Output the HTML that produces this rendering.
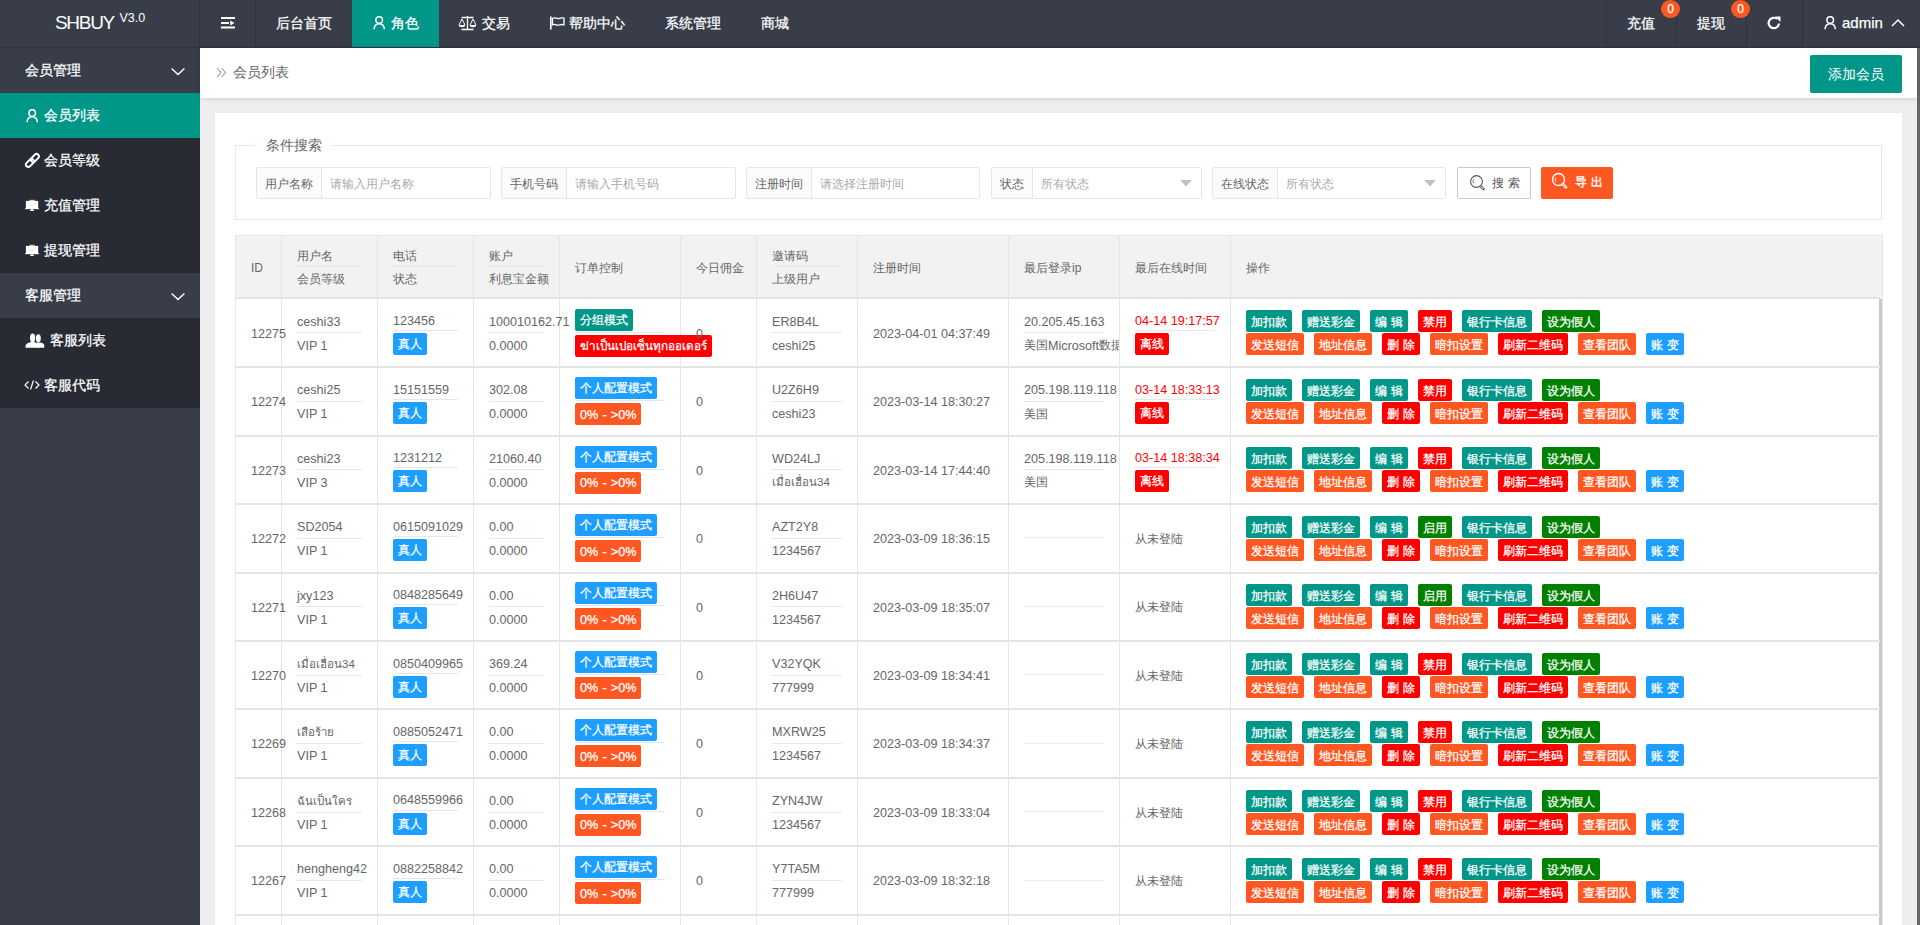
<!DOCTYPE html><html><head><meta charset="utf-8"><style>
*{margin:0;padding:0;box-sizing:border-box}
html,body{width:1920px;height:925px;overflow:hidden;background:#eeeeee;font-family:"Liberation Sans",sans-serif;color:#666}
.abs{position:absolute}
.hdr{position:absolute;left:0;top:0;width:1920px;height:48px;background:#393D49;color:#fff;font-size:14px}
.hdr .it{position:absolute;top:0;height:47px;line-height:47px;white-space:nowrap}
.side{position:absolute;left:0;top:48px;width:200px;height:877px;background:#393D49;color:#fff;font-size:14px}
.side .row{position:absolute;left:0;width:200px;height:45px;line-height:45px;white-space:nowrap}
.bc{position:absolute;left:200px;top:48px;width:1717px;height:50px;background:#fff;box-shadow:0 1px 4px rgba(0,0,0,.13)}
.card{position:absolute;left:215px;top:113px;width:1687px;height:820px;background:#fff;box-shadow:0 0 2px rgba(0,0,0,.05)}
.lbl{position:absolute;height:32px;border:1px solid #e6e6e6;border-radius:2px;background:#fff;font-size:12px}
.lbl .l{position:absolute;left:0;top:0;height:30px;line-height:33px;background:#fbfbfb;border-right:1px solid #e6e6e6;color:#666;padding-left:8px;border-radius:2px 0 0 2px}
.lbl .p{position:absolute;top:0;height:30px;line-height:33px;color:#aaa}
.tb{position:absolute;font-size:12px;color:#666}
.cell{position:absolute;overflow:visible;white-space:nowrap}
.ln{height:23px;line-height:23px;}
.bd{border-bottom:1px solid #e6e6e6}
.n{font-size:12.6px;position:relative;top:1.3px}
.up1{position:relative;top:0.5px}
.hs{position:relative;top:1.5px}
.hs2{position:relative;top:0.3px}
.cn{position:relative;top:1px}
.hdr,.side,.bg,.btn{-webkit-text-stroke:0.25px currentColor}
.bg{display:inline-block;height:22px;line-height:22px;padding:0 5px;border-radius:2px;color:#fff;font-size:12px;white-space:nowrap;vertical-align:top}
.btn{position:absolute;height:22px;line-height:24px;border-radius:2px;color:#fff;font-size:12px;text-align:center;white-space:nowrap}
</style></head><body>
<div class="hdr">
<div class="abs" style="left:0;top:47px;width:1920px;height:1px;background:#30333d"></div>
<div class="abs" style="left:199px;top:0;width:1px;height:48px;background:#30333d"></div>
<div class="abs" style="left:255px;top:0;width:1px;height:47px;background:#30333d"></div>
<div class="abs" style="left:55px;top:8.5px;font-size:19px;letter-spacing:-1.3px;line-height:28px;color:#fff;-webkit-text-stroke:0">SHBUY</div>
<div class="abs" style="left:119.5px;top:8px;font-size:12.5px;line-height:20px;color:#fff;-webkit-text-stroke:0">V3.0</div>
<svg class="abs" style="left:221px;top:16px" width="15" height="14" viewBox="0 0 15 14"><rect x="0" y="1" width="14" height="2" fill="#fff"/><rect x="0" y="6" width="8" height="2" fill="#fff"/><path d="M9.2 4.6 L13.5 7 L9.2 9.4Z" fill="#fff"/><rect x="0" y="10.5" width="14" height="2" fill="#fff"/></svg>
<div class="abs" style="left:352px;top:0;width:87px;height:47px;background:#009688"></div>
<div class="it" style="left:276px">后台首页</div>
<svg class="abs" style="left:373px;top:16px" width="13" height="14" viewBox="0 0 13 14"><circle cx="6.2" cy="4" r="3.3" fill="none" stroke="#fff" stroke-width="1.5"/><path d="M1 13.2 C1.3 9.6 3.4 7.8 6.2 7.8 C9 7.8 11.1 9.6 11.4 13.2" fill="none" stroke="#fff" stroke-width="1.5"/></svg>
<div class="it" style="left:391px">角色</div>
<svg class="abs" style="left:458px;top:15px" width="20" height="16" viewBox="0 0 20 16"><path d="M3.5 2.5 H15.5 M9.5 1 V14.5 M3.5 14.5 H15.5" stroke="#fff" stroke-width="1.3" fill="none"/><path d="M4 4 L1 10 M4 4 L7 10 M15 4 L12 10 M15 4 L18 10" stroke="#fff" stroke-width="1" fill="none"/><path d="M0.8 10 H7.2 Q7 12.2 4 12.2 Q1 12.2 0.8 10Z M11.8 10 H18.2 Q18 12.2 15 12.2 Q12 12.2 11.8 10Z" fill="#fff"/></svg>
<div class="it" style="left:482px">交易</div>
<svg class="abs" style="left:549px;top:16px" width="17" height="14" viewBox="0 0 17 14"><rect x="1" y="0.5" width="1.6" height="13" fill="#fff"/><path d="M3.5 2.2 C6 0.8 8 3.4 10.5 2.4 C12 1.8 13.5 1.8 15 2.2 V8.8 C13.5 8.4 12 8.4 10.5 9 C8 10 6 7.4 3.5 8.8Z" fill="none" stroke="#fff" stroke-width="1.3"/></svg>
<div class="it" style="left:569px">帮助中心</div>
<div class="it" style="left:665px">系统管理</div>
<div class="it" style="left:761px">商城</div>
<div class="abs" style="left:1606px;top:0;width:1px;height:47px;background:#30333d"></div>
<div class="abs" style="left:1676px;top:0;width:1px;height:47px;background:#30333d"></div>
<div class="abs" style="left:1746px;top:0;width:1px;height:47px;background:#30333d"></div>
<div class="abs" style="left:1802px;top:0;width:1px;height:47px;background:#30333d"></div>
<div class="it" style="left:1627px">充值</div>
<div class="it" style="left:1697px">提现</div>
<div class="abs" style="left:1661px;top:0px;width:19px;height:18px;border-radius:9.5px;background:#FF5722;color:#fff;font-size:12px;line-height:18px;text-align:center">0</div>
<div class="abs" style="left:1731px;top:0px;width:19px;height:18px;border-radius:9.5px;background:#FF5722;color:#fff;font-size:12px;line-height:18px;text-align:center">0</div>
<svg class="abs" style="left:1766px;top:15px" width="16" height="16" viewBox="0 0 16 16"><path d="M13 8.5 A5.2 5.2 0 1 1 11.2 4" fill="none" stroke="#fff" stroke-width="2.2"/><path d="M9 1.5 L14.5 1.5 L14.5 7 Z" fill="#fff"/></svg>
<svg class="abs" style="left:1824px;top:16px" width="13" height="14" viewBox="0 0 13 14"><circle cx="6.2" cy="4" r="3.3" fill="none" stroke="#fff" stroke-width="1.5"/><path d="M1 13.2 C1.3 9.6 3.4 7.8 6.2 7.8 C9 7.8 11.1 9.6 11.4 13.2" fill="none" stroke="#fff" stroke-width="1.5"/></svg>
<div class="it" style="left:1842px;top:-1px;font-size:15px">admin</div>
<svg class="abs" style="left:1891px;top:18px" width="14" height="9" viewBox="0 0 14 9"><path d="M1 8 L7 2 L13 8" fill="none" stroke="#fff" stroke-width="1.5"/></svg>
</div>
<div class="side">
<div class="row" style="top:0px;background:#393D49">
<span class="abs" style="left:25px;top:0">会员管理</span>
<svg class="abs" style="left:171px;top:19px" width="14" height="9" viewBox="0 0 14 9"><path d="M0.6 1.4 L7 7.6 L13.4 1.4" fill="none" stroke="#fff" stroke-width="1.4"/></svg>
</div>
<div class="row" style="top:45px;background:#009688">
<svg class="abs" style="left:26px;top:16px" width="13" height="14" viewBox="0 0 13 14"><circle cx="6.2" cy="4" r="3.3" fill="none" stroke="#fff" stroke-width="1.5"/><path d="M1 13.2 C1.3 9.6 3.4 7.8 6.2 7.8 C9 7.8 11.1 9.6 11.4 13.2" fill="none" stroke="#fff" stroke-width="1.5"/></svg>
<span class="abs" style="left:44px;top:0">会员列表</span>
</div>
<div class="row" style="top:90px;background:#282B33">
<svg class="abs" style="left:24px;top:14px" width="17" height="17" viewBox="0 0 17 17"><g fill="none" stroke="#fff" stroke-width="1.9"><rect x="1.25" y="8.60" width="9.30" height="4.80" rx="2.40" transform="rotate(-45 5.90 11.00)"/><rect x="6.25" y="3.60" width="9.30" height="4.80" rx="2.40" transform="rotate(-45 10.90 6.00)"/></g></svg>
<span class="abs" style="left:44px;top:0">会员等级</span>
</div>
<div class="row" style="top:135px;background:#282B33">
<svg class="abs" style="left:24px;top:16px" width="16" height="13" viewBox="0 0 16 13"><rect x="5.4" y="0.8" width="5.4" height="1.6" fill="#ccc"/><rect x="1.9" y="1.9" width="12.3" height="8" fill="#fff"/><rect x="1.2" y="9" width="13.6" height="1.2" fill="#fff"/><rect x="7.1" y="10" width="1.7" height="1.2" fill="#fff"/><rect x="6.1" y="11" width="3.8" height="1" fill="#fff"/><path d="M4.5 7.2 L6.5 5.8 L8.5 6.4 L11.5 4.4" stroke="#e8c8b8" stroke-width="0.7" fill="none"/></svg>
<span class="abs" style="left:44px;top:0">充值管理</span>
</div>
<div class="row" style="top:180px;background:#282B33">
<svg class="abs" style="left:24px;top:16px" width="16" height="13" viewBox="0 0 16 13"><rect x="5.4" y="0.8" width="5.4" height="1.6" fill="#ccc"/><rect x="1.9" y="1.9" width="12.3" height="8" fill="#fff"/><rect x="1.2" y="9" width="13.6" height="1.2" fill="#fff"/><rect x="7.1" y="10" width="1.7" height="1.2" fill="#fff"/><rect x="6.1" y="11" width="3.8" height="1" fill="#fff"/><path d="M4.5 7.2 L6.5 5.8 L8.5 6.4 L11.5 4.4" stroke="#e8c8b8" stroke-width="0.7" fill="none"/></svg>
<span class="abs" style="left:44px;top:0">提现管理</span>
</div>
<div class="row" style="top:225px;background:#393D49">
<span class="abs" style="left:25px;top:0">客服管理</span>
<svg class="abs" style="left:171px;top:19px" width="14" height="9" viewBox="0 0 14 9"><path d="M0.6 1.4 L7 7.6 L13.4 1.4" fill="none" stroke="#fff" stroke-width="1.4"/></svg>
</div>
<div class="row" style="top:270px;background:#282B33">
<svg class="abs" style="left:24px;top:14px" width="22" height="17" viewBox="0 0 22 17"><ellipse cx="14.3" cy="6.3" rx="2.5" ry="4" fill="#fff"/><path d="M13 15.7 V10.6 L16.5 10.4 Q20 11 20.3 13.5 V15.7Z" fill="#fff"/><ellipse cx="8.6" cy="5.9" rx="3.2" ry="4.8" fill="#282B33"/><ellipse cx="8.6" cy="5.9" rx="2.6" ry="4.3" fill="#fff"/><path d="M1.6 15.7 V13.6 Q2.2 11 6.5 10.2 L7.5 9.5 L9.8 9.5 L10.8 10.2 Q14.8 11 15.3 13.6 V15.7Z" fill="#fff"/></svg>
<span class="abs" style="left:50px;top:0">客服列表</span>
</div>
<div class="row" style="top:315px;background:#282B33">
<svg class="abs" style="left:24px;top:17px" width="16" height="10" viewBox="0 0 16 10"><path d="M4.5 1.5 L1 5 L4.5 8.5 M11.5 1.5 L15 5 L11.5 8.5 M9.5 0.5 L6.5 9.5" fill="none" stroke="#fff" stroke-width="1.2"/></svg>
<span class="abs" style="left:44px;top:0">客服代码</span>
</div>
</div>
<div class="abs" style="left:1917px;top:48px;width:3px;height:877px;background:#666"></div>
<div class="bc">
<svg class="abs" style="left:16px;top:19px" width="11" height="11" viewBox="0 0 11 11"><path d="M1 1 L5 5.5 L1 10 M5.5 1 L9.5 5.5 L5.5 10" fill="none" stroke="#999" stroke-width="1.1"/></svg>
<div class="abs" style="left:33px;top:0;line-height:49px;font-size:14px;color:#666">会员列表</div>
<div class="abs" style="left:1610px;top:7px;width:92px;height:38px;line-height:38px;background:#009688;color:#fff;border-radius:2px;text-align:center;font-size:14px">添加会员</div>
</div>
<div class="card"></div>
<div class="abs" style="left:235px;top:145px;width:1647px;height:75px;border:1px solid #e6e6e6"></div>
<div class="abs" style="left:255px;top:136px;width:77px;height:18px;background:#fff"></div>
<div class="abs" style="left:266px;top:136px;font-size:14px;line-height:18px;color:#666">条件搜索</div>
<div class="lbl" style="left:256.0px;top:167px;width:234.5px">
<div class="l" style="width:65px">用户名称</div>
<div class="p" style="left:73px">请输入用户名称</div>
</div>
<div class="lbl" style="left:501.0px;top:167px;width:234.6px">
<div class="l" style="width:65px">手机号码</div>
<div class="p" style="left:73px">请输入手机号码</div>
</div>
<div class="lbl" style="left:746.0px;top:167px;width:234.3px">
<div class="l" style="width:65px">注册时间</div>
<div class="p" style="left:73px">请选择注册时间</div>
</div>
<div class="lbl" style="left:991.0px;top:167px;width:210.6px">
<div class="l" style="width:41px">状态</div>
<div class="p" style="left:49px">所有状态</div>
<svg class="abs" style="right:9px;top:12px" width="12" height="7" viewBox="0 0 12 7"><path d="M0 0 H12 L6 6.5Z" fill="#c2c2c2"/></svg>
</div>
<div class="lbl" style="left:1212.0px;top:167px;width:234.4px">
<div class="l" style="width:65px">在线状态</div>
<div class="p" style="left:73px">所有状态</div>
<svg class="abs" style="right:9px;top:12px" width="12" height="7" viewBox="0 0 12 7"><path d="M0 0 H12 L6 6.5Z" fill="#c2c2c2"/></svg>
</div>
<div class="abs" style="left:1457px;top:167px;width:74px;height:32px;border:1px solid #c9c9c9;border-radius:2px;background:#fff;font-size:12px;color:#555">
<svg class="abs" style="left:11px;top:6px" width="18" height="18" viewBox="0 0 18 18"><circle cx="7.5" cy="7.5" r="5.9" fill="none" stroke="#555" stroke-width="1.1"/><path d="M11.8 12.3 L14.6 15.1" stroke="#555" stroke-width="2.6" stroke-linecap="round"/><path d="M11.8 12.3 L14.6 15.1" stroke="#fff" stroke-width="1" stroke-linecap="round"/><path d="M4.6 5.5 A3.4 3.4 0 0 0 4.8 9.5" fill="none" stroke="#555" stroke-width="0.8"/></svg>
<div class="abs" style="left:34px;top:0;line-height:30px;letter-spacing:4px">搜索</div>
</div>
<div class="abs" style="left:1541px;top:167px;width:72px;height:32px;border-radius:2px;background:#FF5722;font-size:12px;color:#fff">
<svg class="abs" style="left:10px;top:5px" width="18" height="18" viewBox="0 0 18 18"><circle cx="7.5" cy="7.5" r="6" fill="none" stroke="#fff" stroke-width="1.3"/><path d="M12 12.3 L15 15.3" stroke="#fff" stroke-width="2.8" stroke-linecap="round"/><path d="M12 12.3 L15 15.3" stroke="#FF5722" stroke-width="0.9" stroke-linecap="round"/><path d="M4.6 5.5 A3.4 3.4 0 0 0 4.8 9.5" fill="none" stroke="#fff" stroke-width="0.9"/></svg>
<div class="abs" style="left:34px;top:0;line-height:31px;letter-spacing:4px;-webkit-text-stroke:0.35px #fff">导出</div>
</div>
<div class="abs" style="left:235px;top:235px;width:1648px;height:63.60px;background:#f2f2f2;border:1px solid #e6e6e6;border-bottom:none"></div>
<div class="abs" style="left:235px;top:235px;width:1px;height:690px;background:#e6e6e6"></div>
<div class="abs" style="left:281px;top:235px;width:1px;height:690px;background:#e6e6e6"></div>
<div class="abs" style="left:377px;top:235px;width:1px;height:690px;background:#e6e6e6"></div>
<div class="abs" style="left:473px;top:235px;width:1px;height:690px;background:#e6e6e6"></div>
<div class="abs" style="left:559px;top:235px;width:1px;height:690px;background:#e6e6e6"></div>
<div class="abs" style="left:680px;top:235px;width:1px;height:690px;background:#e6e6e6"></div>
<div class="abs" style="left:756px;top:235px;width:1px;height:690px;background:#e6e6e6"></div>
<div class="abs" style="left:857px;top:235px;width:1px;height:690px;background:#e6e6e6"></div>
<div class="abs" style="left:1008px;top:235px;width:1px;height:690px;background:#e6e6e6"></div>
<div class="abs" style="left:1119px;top:235px;width:1px;height:690px;background:#e6e6e6"></div>
<div class="abs" style="left:1230px;top:235px;width:1px;height:690px;background:#e6e6e6"></div>
<div class="abs" style="left:1882px;top:235px;width:1px;height:690px;background:#e6e6e6"></div>
<div class="abs" style="left:1879px;top:299px;width:3px;height:626px;background:#c8c8c8"></div>
<div class="abs" style="left:235px;top:297.00px;width:1645px;height:2px;background:#e4e4e4"></div>
<div class="abs" style="left:235px;top:366.08px;width:1645px;height:2px;background:#e4e4e4"></div>
<div class="abs" style="left:235px;top:434.55px;width:1645px;height:2px;background:#e4e4e4"></div>
<div class="abs" style="left:235px;top:503.02px;width:1645px;height:2px;background:#e4e4e4"></div>
<div class="abs" style="left:235px;top:571.50px;width:1645px;height:2px;background:#e4e4e4"></div>
<div class="abs" style="left:235px;top:639.98px;width:1645px;height:2px;background:#e4e4e4"></div>
<div class="abs" style="left:235px;top:708.45px;width:1645px;height:2px;background:#e4e4e4"></div>
<div class="abs" style="left:235px;top:776.92px;width:1645px;height:2px;background:#e4e4e4"></div>
<div class="abs" style="left:235px;top:845.40px;width:1645px;height:2px;background:#e4e4e4"></div>
<div class="abs" style="left:235px;top:913.88px;width:1645px;height:2px;background:#e4e4e4"></div>
<div class="tb">
<div class="cell" style="left:251px;top:255.30px;line-height:23px;height:23px"><span class="hs">ID</span></div>
<div class="cell" style="left:297px;top:243.30px;width:65px">
<div class="ln bd" style="height:24.0px;line-height:23.0px"><span class="hs">用户名</span></div>
<div class="ln"><span class="hs2">会员等级</span></div>
</div>
<div class="cell" style="left:393px;top:243.30px;width:65px">
<div class="ln bd" style="height:24.0px;line-height:23.0px"><span class="hs">电话</span></div>
<div class="ln"><span class="hs2">状态</span></div>
</div>
<div class="cell" style="left:489px;top:243.30px;width:55px">
<div class="ln bd" style="height:24.0px;line-height:23.0px"><span class="hs">账户</span></div>
<div class="ln"><span class="hs2">利息宝金额</span></div>
</div>
<div class="cell" style="left:575px;top:255.30px;line-height:23px;height:23px"><span class="hs">订单控制</span></div>
<div class="cell" style="left:696px;top:255.30px;line-height:23px;height:23px"><span class="hs">今日佣金</span></div>
<div class="cell" style="left:772px;top:243.30px;width:70px">
<div class="ln bd" style="height:24.0px;line-height:23.0px"><span class="hs">邀请码</span></div>
<div class="ln"><span class="hs2">上级用户</span></div>
</div>
<div class="cell" style="left:873px;top:255.30px;line-height:23px;height:23px"><span class="hs">注册时间</span></div>
<div class="cell" style="left:1024px;top:255.30px;line-height:23px;height:23px"><span class="hs">最后登录ip</span></div>
<div class="cell" style="left:1135px;top:255.30px;line-height:23px;height:23px"><span class="hs">最后在线时间</span></div>
<div class="cell" style="left:1246px;top:255.30px;line-height:23px;height:23px"><span class="hs">操作</span></div>
<div class="cell" style="left:251px;top:321.34px;line-height:23px;height:23px"><span class="n">12275</span></div>
<div class="cell" style="left:297px;top:309.34px;width:65px">
<div class="ln bd" style="height:24.0px;line-height:23.0px"><span class="n">ceshi33</span></div>
<div class="ln"><span class="n">VIP 1</span></div>
</div>
<div class="cell" style="left:393px;top:307.34px;width:65px">
<div class="ln bd" style="height:24.0px;line-height:23.0px"><span style="position:relative;top:1.5px"><span class="n">123456</span></span></div>
<div style="height:25.0px;padding-top:2px"><span class="bg" style="background:#1E9FFF">真人</span></div>
</div>
<div class="cell" style="left:489px;top:309.34px;width:55px">
<div class="ln bd" style="height:24.0px;line-height:23.0px"><span class="n">100010162.71</span></div>
<div class="ln"><span class="n">0.0000</span></div>
</div>
<div class="cell" style="left:575px;top:308.09px;width:90px">
<div class="bd" style="height:24.5px;padding-top:0.5px"><span class="bg" style="background:#009688">分组模式</span></div>
<div style="height:25.0px;padding-top:2px"><span class="bg" style="background:#FF0000"><span style="font-size:11.7px">ฆ่าเป็นเปอเซ็นทุกออเดอร์</span></span></div>
</div>
<div class="cell" style="left:696px;top:321.34px;line-height:23px;height:23px"><span class="n">0</span></div>
<div class="cell" style="left:772px;top:309.34px;width:70px">
<div class="ln bd" style="height:24.0px;line-height:23.0px"><span class="n">ER8B4L</span></div>
<div class="ln"><span class="n">ceshi25</span></div>
</div>
<div class="cell" style="left:873px;top:321.34px;line-height:23px;height:23px"><span class="n">2023-04-01 04:37:49</span></div>
<div style="position:absolute;left:1008px;top:0;width:111px;height:925px;overflow:hidden;clip-path:inset(0)">
<div class="cell" style="left:16px;top:309.34px;width:80px">
<div class="ln bd" style="height:24px"><span class="n">20.205.45.163</span></div>
<div class="ln"><span class="cn">美国</span><span class="n">Microsoft</span><span class="cn">数据中心</span></div>
</div></div>
<div class="cell" style="left:1135px;top:307.34px;width:80px">
<div class="ln bd" style="height:24.0px;line-height:23.0px"><span style="position:relative;top:1.5px"><span class="n" style="color:#f00">04-14 19:17:57</span></span></div>
<div style="height:25.0px;padding-top:2px"><span class="bg" style="background:#FF0000">离线</span></div>
</div>
<div class="btn" style="left:1246px;top:310.34px;width:46px;background:#009688">加扣款</div>
<div class="btn" style="left:1302px;top:310.34px;width:58px;background:#009688">赠送彩金</div>
<div class="btn" style="left:1370px;top:310.34px;width:38px;background:#009688">编 辑</div>
<div class="btn" style="left:1418px;top:310.34px;width:34px;background:#FF0000">禁用</div>
<div class="btn" style="left:1462px;top:310.34px;width:70px;background:#009688">银行卡信息</div>
<div class="btn" style="left:1542px;top:310.34px;width:58px;background:#008000">设为假人</div>
<div class="btn" style="left:1246px;top:333.34px;width:58px;background:#FF5722">发送短信</div>
<div class="btn" style="left:1314px;top:333.34px;width:58px;background:#FF5722">地址信息</div>
<div class="btn" style="left:1382px;top:333.34px;width:38px;background:#FF0000">删 除</div>
<div class="btn" style="left:1430px;top:333.34px;width:58px;background:#FF5722">暗扣设置</div>
<div class="btn" style="left:1498px;top:333.34px;width:70px;background:#FF0000">刷新二维码</div>
<div class="btn" style="left:1578px;top:333.34px;width:58px;background:#FF5722">查看团队</div>
<div class="btn" style="left:1646px;top:333.34px;width:38px;background:#1E9FFF">账 变</div>
<div class="cell" style="left:251px;top:389.81px;line-height:23px;height:23px"><span class="n">12274</span></div>
<div class="cell" style="left:297px;top:377.81px;width:65px">
<div class="ln bd" style="height:24.0px;line-height:23.0px"><span class="n">ceshi25</span></div>
<div class="ln"><span class="n">VIP 1</span></div>
</div>
<div class="cell" style="left:393px;top:375.81px;width:65px">
<div class="ln bd" style="height:24.0px;line-height:23.0px"><span style="position:relative;top:1.5px"><span class="n">15151559</span></span></div>
<div style="height:25.0px;padding-top:2px"><span class="bg" style="background:#1E9FFF">真人</span></div>
</div>
<div class="cell" style="left:489px;top:377.81px;width:55px">
<div class="ln bd" style="height:24.0px;line-height:23.0px"><span class="n">302.08</span></div>
<div class="ln"><span class="n">0.0000</span></div>
</div>
<div class="cell" style="left:575px;top:376.56px;width:90px">
<div class="bd" style="height:24.5px;padding-top:0.5px"><span class="bg" style="background:#1E9FFF">个人配置模式</span></div>
<div style="height:25.0px;padding-top:2px"><span class="bg" style="background:#FF5722"><span style="font-size:12.6px;word-spacing:0.7px;position:relative;top:0.5px">0% - &gt;0%</span></span></div>
</div>
<div class="cell" style="left:696px;top:389.81px;line-height:23px;height:23px"><span class="n">0</span></div>
<div class="cell" style="left:772px;top:377.81px;width:70px">
<div class="ln bd" style="height:24.0px;line-height:23.0px"><span class="n">U2Z6H9</span></div>
<div class="ln"><span class="n">ceshi23</span></div>
</div>
<div class="cell" style="left:873px;top:389.81px;line-height:23px;height:23px"><span class="n">2023-03-14 18:30:27</span></div>
<div style="position:absolute;left:1008px;top:0;width:111px;height:925px;overflow:hidden;clip-path:inset(0)">
<div class="cell" style="left:16px;top:377.81px;width:80px">
<div class="ln bd" style="height:24px"><span class="n">205.198.119.118</span></div>
<div class="ln"><span class="cn">美国</span></div>
</div></div>
<div class="cell" style="left:1135px;top:375.81px;width:80px">
<div class="ln bd" style="height:24.0px;line-height:23.0px"><span style="position:relative;top:1.5px"><span class="n" style="color:#f00">03-14 18:33:13</span></span></div>
<div style="height:25.0px;padding-top:2px"><span class="bg" style="background:#FF0000">离线</span></div>
</div>
<div class="btn" style="left:1246px;top:378.81px;width:46px;background:#009688">加扣款</div>
<div class="btn" style="left:1302px;top:378.81px;width:58px;background:#009688">赠送彩金</div>
<div class="btn" style="left:1370px;top:378.81px;width:38px;background:#009688">编 辑</div>
<div class="btn" style="left:1418px;top:378.81px;width:34px;background:#FF0000">禁用</div>
<div class="btn" style="left:1462px;top:378.81px;width:70px;background:#009688">银行卡信息</div>
<div class="btn" style="left:1542px;top:378.81px;width:58px;background:#008000">设为假人</div>
<div class="btn" style="left:1246px;top:401.81px;width:58px;background:#FF5722">发送短信</div>
<div class="btn" style="left:1314px;top:401.81px;width:58px;background:#FF5722">地址信息</div>
<div class="btn" style="left:1382px;top:401.81px;width:38px;background:#FF0000">删 除</div>
<div class="btn" style="left:1430px;top:401.81px;width:58px;background:#FF5722">暗扣设置</div>
<div class="btn" style="left:1498px;top:401.81px;width:70px;background:#FF0000">刷新二维码</div>
<div class="btn" style="left:1578px;top:401.81px;width:58px;background:#FF5722">查看团队</div>
<div class="btn" style="left:1646px;top:401.81px;width:38px;background:#1E9FFF">账 变</div>
<div class="cell" style="left:251px;top:458.29px;line-height:23px;height:23px"><span class="n">12273</span></div>
<div class="cell" style="left:297px;top:446.29px;width:65px">
<div class="ln bd" style="height:24.0px;line-height:23.0px"><span class="n">ceshi23</span></div>
<div class="ln"><span class="n">VIP 3</span></div>
</div>
<div class="cell" style="left:393px;top:444.29px;width:65px">
<div class="ln bd" style="height:24.0px;line-height:23.0px"><span style="position:relative;top:1.5px"><span class="n">1231212</span></span></div>
<div style="height:25.0px;padding-top:2px"><span class="bg" style="background:#1E9FFF">真人</span></div>
</div>
<div class="cell" style="left:489px;top:446.29px;width:55px">
<div class="ln bd" style="height:24.0px;line-height:23.0px"><span class="n">21060.40</span></div>
<div class="ln"><span class="n">0.0000</span></div>
</div>
<div class="cell" style="left:575px;top:445.04px;width:90px">
<div class="bd" style="height:24.5px;padding-top:0.5px"><span class="bg" style="background:#1E9FFF">个人配置模式</span></div>
<div style="height:25.0px;padding-top:2px"><span class="bg" style="background:#FF5722"><span style="font-size:12.6px;word-spacing:0.7px;position:relative;top:0.5px">0% - &gt;0%</span></span></div>
</div>
<div class="cell" style="left:696px;top:458.29px;line-height:23px;height:23px"><span class="n">0</span></div>
<div class="cell" style="left:772px;top:446.29px;width:70px">
<div class="ln bd" style="height:24.0px;line-height:23.0px"><span class="n">WD24LJ</span></div>
<div class="ln"><span style="font-size:11.5px;position:relative;top:1px">เมื่อเฮื่อน34</span></div>
</div>
<div class="cell" style="left:873px;top:458.29px;line-height:23px;height:23px"><span class="n">2023-03-14 17:44:40</span></div>
<div style="position:absolute;left:1008px;top:0;width:111px;height:925px;overflow:hidden;clip-path:inset(0)">
<div class="cell" style="left:16px;top:446.29px;width:80px">
<div class="ln bd" style="height:24px"><span class="n">205.198.119.118</span></div>
<div class="ln"><span class="cn">美国</span></div>
</div></div>
<div class="cell" style="left:1135px;top:444.29px;width:80px">
<div class="ln bd" style="height:24.0px;line-height:23.0px"><span style="position:relative;top:1.5px"><span class="n" style="color:#f00">03-14 18:38:34</span></span></div>
<div style="height:25.0px;padding-top:2px"><span class="bg" style="background:#FF0000">离线</span></div>
</div>
<div class="btn" style="left:1246px;top:447.29px;width:46px;background:#009688">加扣款</div>
<div class="btn" style="left:1302px;top:447.29px;width:58px;background:#009688">赠送彩金</div>
<div class="btn" style="left:1370px;top:447.29px;width:38px;background:#009688">编 辑</div>
<div class="btn" style="left:1418px;top:447.29px;width:34px;background:#FF0000">禁用</div>
<div class="btn" style="left:1462px;top:447.29px;width:70px;background:#009688">银行卡信息</div>
<div class="btn" style="left:1542px;top:447.29px;width:58px;background:#008000">设为假人</div>
<div class="btn" style="left:1246px;top:470.29px;width:58px;background:#FF5722">发送短信</div>
<div class="btn" style="left:1314px;top:470.29px;width:58px;background:#FF5722">地址信息</div>
<div class="btn" style="left:1382px;top:470.29px;width:38px;background:#FF0000">删 除</div>
<div class="btn" style="left:1430px;top:470.29px;width:58px;background:#FF5722">暗扣设置</div>
<div class="btn" style="left:1498px;top:470.29px;width:70px;background:#FF0000">刷新二维码</div>
<div class="btn" style="left:1578px;top:470.29px;width:58px;background:#FF5722">查看团队</div>
<div class="btn" style="left:1646px;top:470.29px;width:38px;background:#1E9FFF">账 变</div>
<div class="cell" style="left:251px;top:526.76px;line-height:23px;height:23px"><span class="n">12272</span></div>
<div class="cell" style="left:297px;top:514.76px;width:65px">
<div class="ln bd" style="height:24.0px;line-height:23.0px"><span class="n">SD2054</span></div>
<div class="ln"><span class="n">VIP 1</span></div>
</div>
<div class="cell" style="left:393px;top:512.76px;width:65px">
<div class="ln bd" style="height:24.0px;line-height:23.0px"><span style="position:relative;top:1.5px"><span class="n">0615091029</span></span></div>
<div style="height:25.0px;padding-top:2px"><span class="bg" style="background:#1E9FFF">真人</span></div>
</div>
<div class="cell" style="left:489px;top:514.76px;width:55px">
<div class="ln bd" style="height:24.0px;line-height:23.0px"><span class="n">0.00</span></div>
<div class="ln"><span class="n">0.0000</span></div>
</div>
<div class="cell" style="left:575px;top:513.51px;width:90px">
<div class="bd" style="height:24.5px;padding-top:0.5px"><span class="bg" style="background:#1E9FFF">个人配置模式</span></div>
<div style="height:25.0px;padding-top:2px"><span class="bg" style="background:#FF5722"><span style="font-size:12.6px;word-spacing:0.7px;position:relative;top:0.5px">0% - &gt;0%</span></span></div>
</div>
<div class="cell" style="left:696px;top:526.76px;line-height:23px;height:23px"><span class="n">0</span></div>
<div class="cell" style="left:772px;top:514.76px;width:70px">
<div class="ln bd" style="height:24.0px;line-height:23.0px"><span class="n">AZT2Y8</span></div>
<div class="ln"><span class="n">1234567</span></div>
</div>
<div class="cell" style="left:873px;top:526.76px;line-height:23px;height:23px"><span class="n">2023-03-09 18:36:15</span></div>
<div class="abs" style="left:1024px;top:537.26px;width:80px;height:1px;background:#eee"></div>
<div class="cell" style="left:1135px;top:526.76px;line-height:23px;height:23px"><span class="cn">从未登陆</span></div>
<div class="btn" style="left:1246px;top:515.76px;width:46px;background:#009688">加扣款</div>
<div class="btn" style="left:1302px;top:515.76px;width:58px;background:#009688">赠送彩金</div>
<div class="btn" style="left:1370px;top:515.76px;width:38px;background:#009688">编 辑</div>
<div class="btn" style="left:1418px;top:515.76px;width:34px;background:#008000">启用</div>
<div class="btn" style="left:1462px;top:515.76px;width:70px;background:#009688">银行卡信息</div>
<div class="btn" style="left:1542px;top:515.76px;width:58px;background:#008000">设为假人</div>
<div class="btn" style="left:1246px;top:538.76px;width:58px;background:#FF5722">发送短信</div>
<div class="btn" style="left:1314px;top:538.76px;width:58px;background:#FF5722">地址信息</div>
<div class="btn" style="left:1382px;top:538.76px;width:38px;background:#FF0000">删 除</div>
<div class="btn" style="left:1430px;top:538.76px;width:58px;background:#FF5722">暗扣设置</div>
<div class="btn" style="left:1498px;top:538.76px;width:70px;background:#FF0000">刷新二维码</div>
<div class="btn" style="left:1578px;top:538.76px;width:58px;background:#FF5722">查看团队</div>
<div class="btn" style="left:1646px;top:538.76px;width:38px;background:#1E9FFF">账 变</div>
<div class="cell" style="left:251px;top:595.24px;line-height:23px;height:23px"><span class="n">12271</span></div>
<div class="cell" style="left:297px;top:583.24px;width:65px">
<div class="ln bd" style="height:24.0px;line-height:23.0px"><span class="n">jxy123</span></div>
<div class="ln"><span class="n">VIP 1</span></div>
</div>
<div class="cell" style="left:393px;top:581.24px;width:65px">
<div class="ln bd" style="height:24.0px;line-height:23.0px"><span style="position:relative;top:1.5px"><span class="n">0848285649</span></span></div>
<div style="height:25.0px;padding-top:2px"><span class="bg" style="background:#1E9FFF">真人</span></div>
</div>
<div class="cell" style="left:489px;top:583.24px;width:55px">
<div class="ln bd" style="height:24.0px;line-height:23.0px"><span class="n">0.00</span></div>
<div class="ln"><span class="n">0.0000</span></div>
</div>
<div class="cell" style="left:575px;top:581.99px;width:90px">
<div class="bd" style="height:24.5px;padding-top:0.5px"><span class="bg" style="background:#1E9FFF">个人配置模式</span></div>
<div style="height:25.0px;padding-top:2px"><span class="bg" style="background:#FF5722"><span style="font-size:12.6px;word-spacing:0.7px;position:relative;top:0.5px">0% - &gt;0%</span></span></div>
</div>
<div class="cell" style="left:696px;top:595.24px;line-height:23px;height:23px"><span class="n">0</span></div>
<div class="cell" style="left:772px;top:583.24px;width:70px">
<div class="ln bd" style="height:24.0px;line-height:23.0px"><span class="n">2H6U47</span></div>
<div class="ln"><span class="n">1234567</span></div>
</div>
<div class="cell" style="left:873px;top:595.24px;line-height:23px;height:23px"><span class="n">2023-03-09 18:35:07</span></div>
<div class="abs" style="left:1024px;top:605.74px;width:80px;height:1px;background:#eee"></div>
<div class="cell" style="left:1135px;top:595.24px;line-height:23px;height:23px"><span class="cn">从未登陆</span></div>
<div class="btn" style="left:1246px;top:584.24px;width:46px;background:#009688">加扣款</div>
<div class="btn" style="left:1302px;top:584.24px;width:58px;background:#009688">赠送彩金</div>
<div class="btn" style="left:1370px;top:584.24px;width:38px;background:#009688">编 辑</div>
<div class="btn" style="left:1418px;top:584.24px;width:34px;background:#008000">启用</div>
<div class="btn" style="left:1462px;top:584.24px;width:70px;background:#009688">银行卡信息</div>
<div class="btn" style="left:1542px;top:584.24px;width:58px;background:#008000">设为假人</div>
<div class="btn" style="left:1246px;top:607.24px;width:58px;background:#FF5722">发送短信</div>
<div class="btn" style="left:1314px;top:607.24px;width:58px;background:#FF5722">地址信息</div>
<div class="btn" style="left:1382px;top:607.24px;width:38px;background:#FF0000">删 除</div>
<div class="btn" style="left:1430px;top:607.24px;width:58px;background:#FF5722">暗扣设置</div>
<div class="btn" style="left:1498px;top:607.24px;width:70px;background:#FF0000">刷新二维码</div>
<div class="btn" style="left:1578px;top:607.24px;width:58px;background:#FF5722">查看团队</div>
<div class="btn" style="left:1646px;top:607.24px;width:38px;background:#1E9FFF">账 变</div>
<div class="cell" style="left:251px;top:663.71px;line-height:23px;height:23px"><span class="n">12270</span></div>
<div class="cell" style="left:297px;top:651.71px;width:65px">
<div class="ln bd" style="height:24.0px;line-height:23.0px"><span style="font-size:11.5px;position:relative;top:1px">เมื่อเฮื่อน34</span></div>
<div class="ln"><span class="n">VIP 1</span></div>
</div>
<div class="cell" style="left:393px;top:649.71px;width:65px">
<div class="ln bd" style="height:24.0px;line-height:23.0px"><span style="position:relative;top:1.5px"><span class="n">0850409965</span></span></div>
<div style="height:25.0px;padding-top:2px"><span class="bg" style="background:#1E9FFF">真人</span></div>
</div>
<div class="cell" style="left:489px;top:651.71px;width:55px">
<div class="ln bd" style="height:24.0px;line-height:23.0px"><span class="n">369.24</span></div>
<div class="ln"><span class="n">0.0000</span></div>
</div>
<div class="cell" style="left:575px;top:650.46px;width:90px">
<div class="bd" style="height:24.5px;padding-top:0.5px"><span class="bg" style="background:#1E9FFF">个人配置模式</span></div>
<div style="height:25.0px;padding-top:2px"><span class="bg" style="background:#FF5722"><span style="font-size:12.6px;word-spacing:0.7px;position:relative;top:0.5px">0% - &gt;0%</span></span></div>
</div>
<div class="cell" style="left:696px;top:663.71px;line-height:23px;height:23px"><span class="n">0</span></div>
<div class="cell" style="left:772px;top:651.71px;width:70px">
<div class="ln bd" style="height:24.0px;line-height:23.0px"><span class="n">V32YQK</span></div>
<div class="ln"><span class="n">777999</span></div>
</div>
<div class="cell" style="left:873px;top:663.71px;line-height:23px;height:23px"><span class="n">2023-03-09 18:34:41</span></div>
<div class="abs" style="left:1024px;top:674.21px;width:80px;height:1px;background:#eee"></div>
<div class="cell" style="left:1135px;top:663.71px;line-height:23px;height:23px"><span class="cn">从未登陆</span></div>
<div class="btn" style="left:1246px;top:652.71px;width:46px;background:#009688">加扣款</div>
<div class="btn" style="left:1302px;top:652.71px;width:58px;background:#009688">赠送彩金</div>
<div class="btn" style="left:1370px;top:652.71px;width:38px;background:#009688">编 辑</div>
<div class="btn" style="left:1418px;top:652.71px;width:34px;background:#FF0000">禁用</div>
<div class="btn" style="left:1462px;top:652.71px;width:70px;background:#009688">银行卡信息</div>
<div class="btn" style="left:1542px;top:652.71px;width:58px;background:#008000">设为假人</div>
<div class="btn" style="left:1246px;top:675.71px;width:58px;background:#FF5722">发送短信</div>
<div class="btn" style="left:1314px;top:675.71px;width:58px;background:#FF5722">地址信息</div>
<div class="btn" style="left:1382px;top:675.71px;width:38px;background:#FF0000">删 除</div>
<div class="btn" style="left:1430px;top:675.71px;width:58px;background:#FF5722">暗扣设置</div>
<div class="btn" style="left:1498px;top:675.71px;width:70px;background:#FF0000">刷新二维码</div>
<div class="btn" style="left:1578px;top:675.71px;width:58px;background:#FF5722">查看团队</div>
<div class="btn" style="left:1646px;top:675.71px;width:38px;background:#1E9FFF">账 变</div>
<div class="cell" style="left:251px;top:732.19px;line-height:23px;height:23px"><span class="n">12269</span></div>
<div class="cell" style="left:297px;top:720.19px;width:65px">
<div class="ln bd" style="height:24.0px;line-height:23.0px"><span style="font-size:11.5px;position:relative;top:1px">เสือร้าย</span></div>
<div class="ln"><span class="n">VIP 1</span></div>
</div>
<div class="cell" style="left:393px;top:718.19px;width:65px">
<div class="ln bd" style="height:24.0px;line-height:23.0px"><span style="position:relative;top:1.5px"><span class="n">0885052471</span></span></div>
<div style="height:25.0px;padding-top:2px"><span class="bg" style="background:#1E9FFF">真人</span></div>
</div>
<div class="cell" style="left:489px;top:720.19px;width:55px">
<div class="ln bd" style="height:24.0px;line-height:23.0px"><span class="n">0.00</span></div>
<div class="ln"><span class="n">0.0000</span></div>
</div>
<div class="cell" style="left:575px;top:718.94px;width:90px">
<div class="bd" style="height:24.5px;padding-top:0.5px"><span class="bg" style="background:#1E9FFF">个人配置模式</span></div>
<div style="height:25.0px;padding-top:2px"><span class="bg" style="background:#FF5722"><span style="font-size:12.6px;word-spacing:0.7px;position:relative;top:0.5px">0% - &gt;0%</span></span></div>
</div>
<div class="cell" style="left:696px;top:732.19px;line-height:23px;height:23px"><span class="n">0</span></div>
<div class="cell" style="left:772px;top:720.19px;width:70px">
<div class="ln bd" style="height:24.0px;line-height:23.0px"><span class="n">MXRW25</span></div>
<div class="ln"><span class="n">1234567</span></div>
</div>
<div class="cell" style="left:873px;top:732.19px;line-height:23px;height:23px"><span class="n">2023-03-09 18:34:37</span></div>
<div class="abs" style="left:1024px;top:742.69px;width:80px;height:1px;background:#eee"></div>
<div class="cell" style="left:1135px;top:732.19px;line-height:23px;height:23px"><span class="cn">从未登陆</span></div>
<div class="btn" style="left:1246px;top:721.19px;width:46px;background:#009688">加扣款</div>
<div class="btn" style="left:1302px;top:721.19px;width:58px;background:#009688">赠送彩金</div>
<div class="btn" style="left:1370px;top:721.19px;width:38px;background:#009688">编 辑</div>
<div class="btn" style="left:1418px;top:721.19px;width:34px;background:#FF0000">禁用</div>
<div class="btn" style="left:1462px;top:721.19px;width:70px;background:#009688">银行卡信息</div>
<div class="btn" style="left:1542px;top:721.19px;width:58px;background:#008000">设为假人</div>
<div class="btn" style="left:1246px;top:744.19px;width:58px;background:#FF5722">发送短信</div>
<div class="btn" style="left:1314px;top:744.19px;width:58px;background:#FF5722">地址信息</div>
<div class="btn" style="left:1382px;top:744.19px;width:38px;background:#FF0000">删 除</div>
<div class="btn" style="left:1430px;top:744.19px;width:58px;background:#FF5722">暗扣设置</div>
<div class="btn" style="left:1498px;top:744.19px;width:70px;background:#FF0000">刷新二维码</div>
<div class="btn" style="left:1578px;top:744.19px;width:58px;background:#FF5722">查看团队</div>
<div class="btn" style="left:1646px;top:744.19px;width:38px;background:#1E9FFF">账 变</div>
<div class="cell" style="left:251px;top:800.66px;line-height:23px;height:23px"><span class="n">12268</span></div>
<div class="cell" style="left:297px;top:788.66px;width:65px">
<div class="ln bd" style="height:24.0px;line-height:23.0px"><span style="font-size:11.5px;position:relative;top:1px">ฉันเป็นใคร</span></div>
<div class="ln"><span class="n">VIP 1</span></div>
</div>
<div class="cell" style="left:393px;top:786.66px;width:65px">
<div class="ln bd" style="height:24.0px;line-height:23.0px"><span style="position:relative;top:1.5px"><span class="n">0648559966</span></span></div>
<div style="height:25.0px;padding-top:2px"><span class="bg" style="background:#1E9FFF">真人</span></div>
</div>
<div class="cell" style="left:489px;top:788.66px;width:55px">
<div class="ln bd" style="height:24.0px;line-height:23.0px"><span class="n">0.00</span></div>
<div class="ln"><span class="n">0.0000</span></div>
</div>
<div class="cell" style="left:575px;top:787.41px;width:90px">
<div class="bd" style="height:24.5px;padding-top:0.5px"><span class="bg" style="background:#1E9FFF">个人配置模式</span></div>
<div style="height:25.0px;padding-top:2px"><span class="bg" style="background:#FF5722"><span style="font-size:12.6px;word-spacing:0.7px;position:relative;top:0.5px">0% - &gt;0%</span></span></div>
</div>
<div class="cell" style="left:696px;top:800.66px;line-height:23px;height:23px"><span class="n">0</span></div>
<div class="cell" style="left:772px;top:788.66px;width:70px">
<div class="ln bd" style="height:24.0px;line-height:23.0px"><span class="n">ZYN4JW</span></div>
<div class="ln"><span class="n">1234567</span></div>
</div>
<div class="cell" style="left:873px;top:800.66px;line-height:23px;height:23px"><span class="n">2023-03-09 18:33:04</span></div>
<div class="abs" style="left:1024px;top:811.16px;width:80px;height:1px;background:#eee"></div>
<div class="cell" style="left:1135px;top:800.66px;line-height:23px;height:23px"><span class="cn">从未登陆</span></div>
<div class="btn" style="left:1246px;top:789.66px;width:46px;background:#009688">加扣款</div>
<div class="btn" style="left:1302px;top:789.66px;width:58px;background:#009688">赠送彩金</div>
<div class="btn" style="left:1370px;top:789.66px;width:38px;background:#009688">编 辑</div>
<div class="btn" style="left:1418px;top:789.66px;width:34px;background:#FF0000">禁用</div>
<div class="btn" style="left:1462px;top:789.66px;width:70px;background:#009688">银行卡信息</div>
<div class="btn" style="left:1542px;top:789.66px;width:58px;background:#008000">设为假人</div>
<div class="btn" style="left:1246px;top:812.66px;width:58px;background:#FF5722">发送短信</div>
<div class="btn" style="left:1314px;top:812.66px;width:58px;background:#FF5722">地址信息</div>
<div class="btn" style="left:1382px;top:812.66px;width:38px;background:#FF0000">删 除</div>
<div class="btn" style="left:1430px;top:812.66px;width:58px;background:#FF5722">暗扣设置</div>
<div class="btn" style="left:1498px;top:812.66px;width:70px;background:#FF0000">刷新二维码</div>
<div class="btn" style="left:1578px;top:812.66px;width:58px;background:#FF5722">查看团队</div>
<div class="btn" style="left:1646px;top:812.66px;width:38px;background:#1E9FFF">账 变</div>
<div class="cell" style="left:251px;top:869.14px;line-height:23px;height:23px"><span class="n">12267</span></div>
<div class="cell" style="left:297px;top:857.14px;width:65px">
<div class="ln bd" style="height:24.0px;line-height:23.0px"><span class="n">hengheng42</span></div>
<div class="ln"><span class="n">VIP 1</span></div>
</div>
<div class="cell" style="left:393px;top:855.14px;width:65px">
<div class="ln bd" style="height:24.0px;line-height:23.0px"><span style="position:relative;top:1.5px"><span class="n">0882258842</span></span></div>
<div style="height:25.0px;padding-top:2px"><span class="bg" style="background:#1E9FFF">真人</span></div>
</div>
<div class="cell" style="left:489px;top:857.14px;width:55px">
<div class="ln bd" style="height:24.0px;line-height:23.0px"><span class="n">0.00</span></div>
<div class="ln"><span class="n">0.0000</span></div>
</div>
<div class="cell" style="left:575px;top:855.89px;width:90px">
<div class="bd" style="height:24.5px;padding-top:0.5px"><span class="bg" style="background:#1E9FFF">个人配置模式</span></div>
<div style="height:25.0px;padding-top:2px"><span class="bg" style="background:#FF5722"><span style="font-size:12.6px;word-spacing:0.7px;position:relative;top:0.5px">0% - &gt;0%</span></span></div>
</div>
<div class="cell" style="left:696px;top:869.14px;line-height:23px;height:23px"><span class="n">0</span></div>
<div class="cell" style="left:772px;top:857.14px;width:70px">
<div class="ln bd" style="height:24.0px;line-height:23.0px"><span class="n">Y7TA5M</span></div>
<div class="ln"><span class="n">777999</span></div>
</div>
<div class="cell" style="left:873px;top:869.14px;line-height:23px;height:23px"><span class="n">2023-03-09 18:32:18</span></div>
<div class="abs" style="left:1024px;top:879.64px;width:80px;height:1px;background:#eee"></div>
<div class="cell" style="left:1135px;top:869.14px;line-height:23px;height:23px"><span class="cn">从未登陆</span></div>
<div class="btn" style="left:1246px;top:858.14px;width:46px;background:#009688">加扣款</div>
<div class="btn" style="left:1302px;top:858.14px;width:58px;background:#009688">赠送彩金</div>
<div class="btn" style="left:1370px;top:858.14px;width:38px;background:#009688">编 辑</div>
<div class="btn" style="left:1418px;top:858.14px;width:34px;background:#FF0000">禁用</div>
<div class="btn" style="left:1462px;top:858.14px;width:70px;background:#009688">银行卡信息</div>
<div class="btn" style="left:1542px;top:858.14px;width:58px;background:#008000">设为假人</div>
<div class="btn" style="left:1246px;top:881.14px;width:58px;background:#FF5722">发送短信</div>
<div class="btn" style="left:1314px;top:881.14px;width:58px;background:#FF5722">地址信息</div>
<div class="btn" style="left:1382px;top:881.14px;width:38px;background:#FF0000">删 除</div>
<div class="btn" style="left:1430px;top:881.14px;width:58px;background:#FF5722">暗扣设置</div>
<div class="btn" style="left:1498px;top:881.14px;width:70px;background:#FF0000">刷新二维码</div>
<div class="btn" style="left:1578px;top:881.14px;width:58px;background:#FF5722">查看团队</div>
<div class="btn" style="left:1646px;top:881.14px;width:38px;background:#1E9FFF">账 变</div>
</div>
</body></html>
